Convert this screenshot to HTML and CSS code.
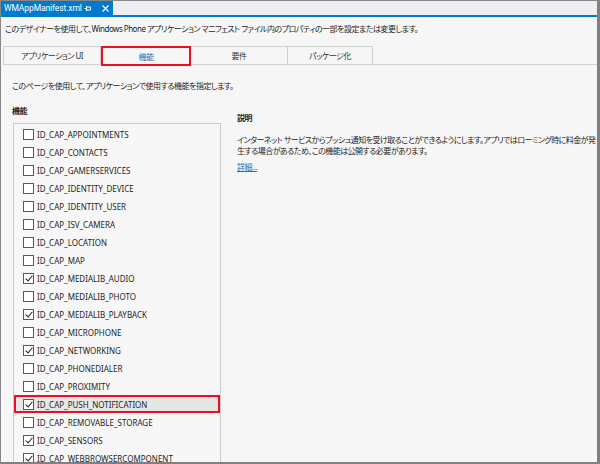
FILE: index.html
```html
<!DOCTYPE html>
<html lang="ja">
<head>
<meta charset="utf-8">
<link rel="stylesheet" href="styles.css">
</head>
<body>
<div class="window">
  <div class="docbar">
    <div class="doctab">
      <span class="docname">WMAppManifest.xml</span>
      <svg class="pin" width="8" height="7" viewBox="0 0 8 7"><path d="M0.5 3.5H2.5M2.5 1V6M2.5 2H6.5V5H2.5" fill="none" stroke="#fff" stroke-width="1"/></svg>
      <svg class="close" width="7" height="7" viewBox="0 0 7 7"><path d="M0.5 0.5L6.5 6.5M6.5 0.5L0.5 6.5" stroke="#fff" stroke-width="1.2"/></svg>
    </div>
  </div>
  <div class="content">
    <p class="intro">このデザイナーを使用して、Windows Phone アプリケーション マニフェスト ファイル内のプロパティの一部を設定または変更します。</p>
    <div class="tabs">
      <div class="tab t1">アプリケーション UI</div>
      <div class="tab t2 active">機能</div>
      <div class="tab t3">要件</div>
      <div class="tab t4">パッケージ化</div>
      <div class="tabfill"></div>
    </div>
    <p class="pagedesc">このページを使用して、アプリケーションで使用する機能を指定します。</p>
    <div class="columns">
      <div class="leftcol">
        <h3 class="heading">機能</h3>
        <div class="listbox">
          <div class="row"><span class="cb"></span>ID_CAP_APPOINTMENTS</div>
          <div class="row"><span class="cb"></span>ID_CAP_CONTACTS</div>
          <div class="row"><span class="cb"></span>ID_CAP_GAMERSERVICES</div>
          <div class="row"><span class="cb"></span>ID_CAP_IDENTITY_DEVICE</div>
          <div class="row"><span class="cb"></span>ID_CAP_IDENTITY_USER</div>
          <div class="row"><span class="cb"></span>ID_CAP_ISV_CAMERA</div>
          <div class="row"><span class="cb"></span>ID_CAP_LOCATION</div>
          <div class="row"><span class="cb"></span>ID_CAP_MAP</div>
          <div class="row"><span class="cb on"></span>ID_CAP_MEDIALIB_AUDIO</div>
          <div class="row"><span class="cb"></span>ID_CAP_MEDIALIB_PHOTO</div>
          <div class="row"><span class="cb on"></span>ID_CAP_MEDIALIB_PLAYBACK</div>
          <div class="row"><span class="cb"></span>ID_CAP_MICROPHONE</div>
          <div class="row"><span class="cb on"></span>ID_CAP_NETWORKING</div>
          <div class="row"><span class="cb"></span>ID_CAP_PHONEDIALER</div>
          <div class="row"><span class="cb"></span>ID_CAP_PROXIMITY</div>
          <div class="row selected"><span class="cb on"></span>ID_CAP_PUSH_NOTIFICATION</div>
          <div class="row"><span class="cb"></span>ID_CAP_REMOVABLE_STORAGE</div>
          <div class="row"><span class="cb on"></span>ID_CAP_SENSORS</div>
          <div class="row"><span class="cb on"></span>ID_CAP_WEBBROWSERCOMPONENT</div>
        </div>
      </div>
      <div class="rightcol">
        <h3 class="heading">説明</h3>
        <p class="desc">インターネット サービスからプッシュ通知を受け取ることができるようにします。アプリではローミング時に料金が発生する場合があるため、この機能は公開する必要があります。</p>
        <a class="more" href="#">詳細...</a>
      </div>
    </div>
  </div>
</div>
</body>
</html>
```

FILE: styles.css
```css
* { box-sizing: border-box; }
html, body { margin: 0; padding: 0; }
body {
  width: 600px;
  height: 464px;
  overflow: hidden;
  font-family: "Noto Sans", "Noto Sans CJK JP", sans-serif;
  font-size: 8px;
  color: #1e1e1e;
  font-feature-settings: "palt";
  letter-spacing: -0.5px;
}
.window {
  width: 600px;
  height: 464px;
  border-top: 1px solid #888;
  border-left: 1px solid #888;
  border-right: 3px solid #808080;
  border-bottom: 2px solid #808080;
  background: #f6f6f6;
  overflow: hidden;
}
.docbar {
  height: 16px;
  background: #eeeef2;
  border-bottom: 2px solid #007acc;
  display: flex;
}
.doctab {
  width: 112px;
  height: 14px;
  background: #007acc;
  color: #fff;
  display: flex;
  align-items: center;
  padding-left: 3px;
  font-family: Roboto, "Noto Sans", sans-serif;
  font-size: 8.5px;
  letter-spacing: -0.1px;
  line-height: 14px;
  overflow: hidden;
}
.docname { flex: none; width: 78px; white-space: nowrap; overflow: hidden; }
.pin { margin-left: 2px; flex: none; }
.close { margin-left: 10px; flex: none; }
.content { padding: 6px 0 0 0; }
.intro {
  margin: 0 0 0 4px;
  line-height: 11px;
  white-space: nowrap;
}
.tabs {
  display: flex;
  margin: 12px 0 0 2px;
  height: 19px;
}
.tab {
  height: 19px;
  border: 1px solid #d0d0d0;
  border-left: none;
  display: flex;
  align-items: center;
  justify-content: center;
  color: #333;
}
.t1 { width: 98px; border-left: 1px solid #d0d0d0; }
.t2 { width: 90px; }
.t3 { width: 97px; }
.t4 { width: 85px; }
.tab.active {
  color: #1e6fba;
  border: 2px solid #e81123;
  height: 20px;
}
.tabfill {
  flex: 1;
  border-bottom: 1px solid #d0d0d0;
}
.pagedesc {
  margin: 15px 0 0 11px;
  line-height: 11px;
}
.columns {
  display: flex;
  margin-top: 14px;
}
.leftcol {
  width: 220px;
  padding-left: 11px;
  flex: none;
}
.heading {
  margin: 0;
  font-size: 8px;
  font-weight: bold;
  line-height: 11px;
}
.listbox {
  margin: 7px 0 0 1px;
  width: 208px;
  border: 1px solid #cccccc;
  background: #f7f7f7;
  padding-top: 1px;
  letter-spacing: 0;
}
.row {
  height: 18px;
  display: flex;
  align-items: center;
  padding-left: 9px;
  white-space: nowrap;
  font-size: 8px;
}
.row.selected {
  outline: 2px solid #e81123;
  outline-offset: -2px;
  background: #e6e6e6;
}
.cb {
  width: 11px;
  height: 11px;
  border: 1px solid #5a5a5a;
  background: #fff;
  margin-right: 3px;
  flex: none;
  position: relative;
}
.cb.on::after {
  content: "";
  position: absolute;
  left: 3px;
  top: 0px;
  width: 3px;
  height: 6px;
  border-right: 1.5px solid #222;
  border-bottom: 1.5px solid #222;
  transform: rotate(40deg);
}
.rightcol {
  flex: 1;
  padding-left: 16px;
  padding-right: 0;
  padding-top: 7px;
}
.desc {
  margin: 11px 0 0 0;
  line-height: 11px;
  letter-spacing: -0.55px;
}
.more {
  display: inline-block;
  margin-top: 5px;
  color: #1e6fba;
  text-decoration: underline;
  line-height: 11px;
}
```
